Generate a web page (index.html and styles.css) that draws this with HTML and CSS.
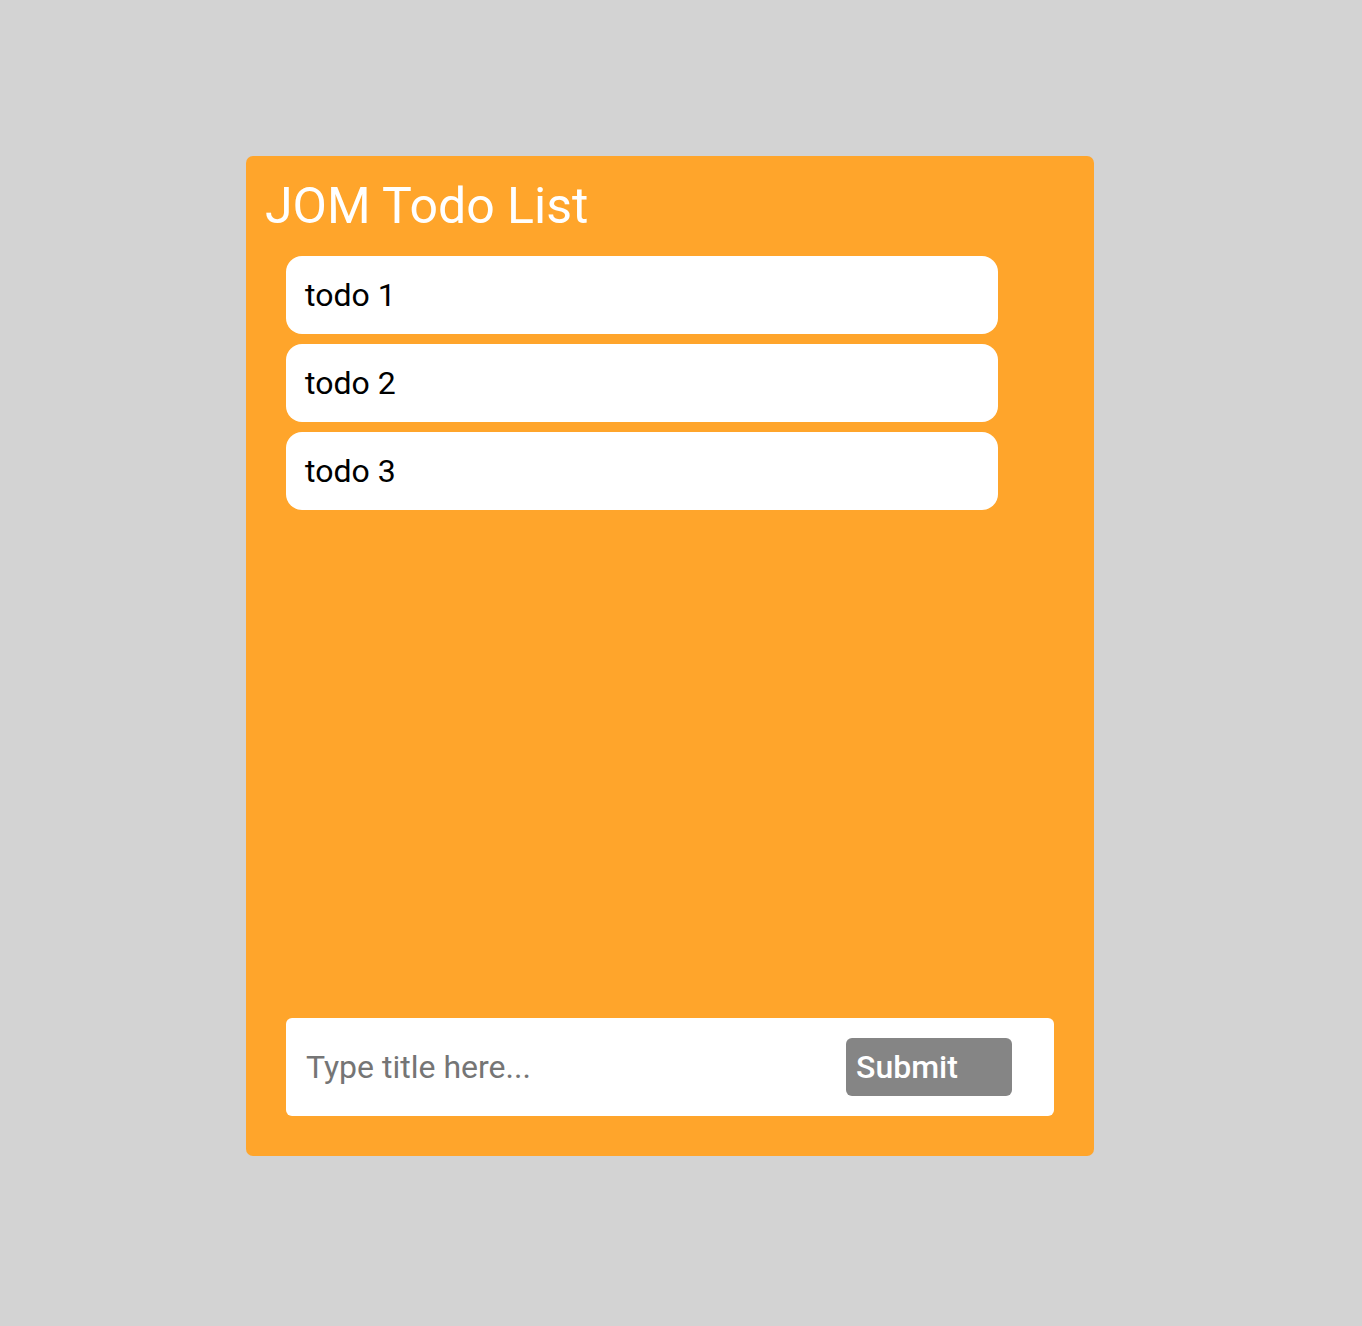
FILE: index.html
```html
<!DOCTYPE html>
<html>
<head>
<meta charset="utf-8">
<link rel="stylesheet" href="styles.css">
</head>
<body>
<div class="card">
  <h1 class="title">JOM Todo List</h1>
  <ul class="list">
    <li class="item">todo 1</li>
    <li class="item">todo 2</li>
    <li class="item">todo 3</li>
  </ul>
  <form class="bar">
    <input class="field" type="text" placeholder="Type title here...">
    <button class="submit" type="button">Submit</button>
  </form>
</div>
</body>
</html>
```
FILE: styles.css
```css
html, body {
  margin: 0;
  padding: 0;
  background: #d3d3d3;
  font-family: Roboto, "Liberation Sans", sans-serif;
}
body {
  min-height: 1326px;
}
.card {
  box-sizing: border-box;
  width: 848px;
  height: 1000px;
  margin: 156px 0 0 246px;
  background: #ffa52b;
  border-radius: 7px;
  padding: 0 40px 40px 40px;
  display: flex;
  flex-direction: column;
}
.title {
  margin: 18px 0 0 -21px;
  font-size: 50px;
  font-weight: 400;
  line-height: 64px;
  color: #ffffff;
}
.list {
  list-style: none;
  margin: 18px 0 0 0;
  padding: 0;
  flex: 1;
  display: flex;
  flex-direction: column;
  gap: 10px;
}
.item {
  box-sizing: border-box;
  width: 712px;
  height: 78px;
  background: #ffffff;
  border-radius: 16px;
  padding: 0 19px;
  display: flex;
  align-items: center;
  font-size: 32px;
  color: #000000;
}
.bar {
  box-sizing: border-box;
  height: 98px;
  background: #ffffff;
  border-radius: 6px;
  padding: 20px 42px 20px 20px;
  display: flex;
  align-items: center;
  margin: 0;
}
.field {
  flex: 1;
  border: none;
  outline: none;
  padding: 0;
  font-family: Roboto, "Liberation Sans", sans-serif;
  font-size: 32px;
  color: #000;
  background: transparent;
  min-width: 0;
}
.field::placeholder {
  color: #757575;
}
.submit {
  box-sizing: border-box;
  width: 166px;
  height: 58px;
  border: none;
  border-radius: 6px;
  background: #858585;
  color: #ffffff;
  font-family: Roboto, "Liberation Sans", sans-serif;
  font-size: 32px;
  font-weight: 500;
  text-align: left;
  padding: 0 10px;
}
```
